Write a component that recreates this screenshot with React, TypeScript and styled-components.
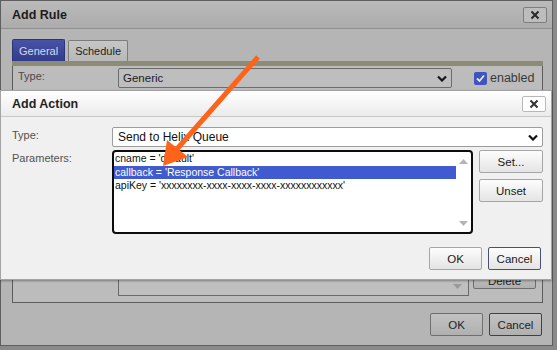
import * as React from "react";
import styled, { createGlobalStyle } from "styled-components";

const GlobalStyle = createGlobalStyle`
  html, body {
    margin: 0;
    padding: 0;
    background: #707070;
  }
  body {
    font-family: "Liberation Sans", Arial, sans-serif;
    font-size: 12px;
  }
`;

const Screen = styled.div`
  position: relative;
  width: 557px;
  height: 350px;
  overflow: hidden;
  background: #8a8a8a;
`;

/* ---------- outer (dimmed) dialog ---------- */

const OuterDialog = styled.div`
  box-sizing: border-box;
  width: 553px;
  height: 346px;
  border: 1px solid #5e5e5e;
  background: #b5b5b5;
  display: flex;
  flex-direction: column;
`;

const TitleBar = styled.div<{ $light?: boolean }>`
  box-sizing: border-box;
  height: ${(p) => (p.$light ? "26px" : "28px")};
  flex-shrink: 0;
  display: flex;
  align-items: center;
  justify-content: space-between;
  padding: 0 5px 0 11px;
  background: ${(p) =>
    p.$light
      ? "linear-gradient(#ffffff, #ebebeb)"
      : "linear-gradient(#bababa, #acacac)"};
  border-bottom: 1px solid ${(p) => (p.$light ? "#c8c8c8" : "#8e8e8e")};
`;

const Title = styled.span<{ $light?: boolean }>`
  font-weight: bold;
  font-size: 12.5px;
  color: ${(p) => (p.$light ? "#222" : "#1c1c1c")};
`;

const CloseButton = styled.div<{ $light?: boolean }>`
  box-sizing: border-box;
  width: 24px;
  height: 16px;
  border: 1px solid ${(p) => (p.$light ? "#b8b8b8" : "#7e7e7e")};
  border-radius: 2px;
  background: ${(p) => (p.$light ? "#ffffff" : "#bdbdbd")};
  display: flex;
  align-items: center;
  justify-content: center;
`;

const OuterBody = styled.div`
  flex: 1;
  display: flex;
  flex-direction: column;
  padding: 10px 9px 0 11px;
`;

const TabStrip = styled.div`
  display: flex;
  align-items: flex-end;
  gap: 3px;
  height: 22px;
`;

const Tab = styled.div<{ $active?: boolean }>`
  box-sizing: border-box;
  height: ${(p) => (p.$active ? "22px" : "21px")};
  padding: 0 6px;
  display: flex;
  align-items: center;
  font-size: 11px;
  border: 1px solid ${(p) => (p.$active ? "#2b3477" : "#7c7c7c")};
  border-bottom: none;
  border-radius: 2px 2px 0 0;
  color: ${(p) => (p.$active ? "#d6d8ea" : "#1e1e1e")};
  background: ${(p) =>
    p.$active
      ? "linear-gradient(#4853a8, #323c8c)"
      : "linear-gradient(#c6c6c6, #b8b8b8)"};
`;

const TabRule = styled.div`
  height: 5px;
  background: #8b8b77;
`;

const TabPanel = styled.div`
  box-sizing: border-box;
  height: 237px;
  border: 1px solid #5c5c5c;
  border-top: none;
  background: #bcbcbc;
  display: flex;
  flex-direction: column;
  justify-content: space-between;
  padding: 2px 6px 6px 5px;
`;

const PanelRow = styled.div`
  display: flex;
  align-items: center;
`;

const DimLabel = styled.span`
  width: 100px;
  align-self: flex-start;
  padding-top: 2px;
  font-size: 11px;
  color: #4a4a4a;
`;

const DimSelect = styled.div<{ $w: number }>`
  box-sizing: border-box;
  width: ${(p) => p.$w}px;
  height: 20px;
  border: 1px solid #6c6c6c;
  border-radius: 2px;
  background: #bebebe;
  display: flex;
  align-items: center;
  justify-content: space-between;
  padding: 0 4px 0 4px;
  font-size: 11.5px;
  color: #1c1c1c;
`;

const CheckGroup = styled.label`
  display: flex;
  align-items: center;
  gap: 3px;
  margin-left: 22px;
  font-size: 12.5px;
  color: #3a3a3a;
`;

const CheckBox = styled.span`
  width: 13px;
  height: 13px;
  border-radius: 2px;
  background: #4053bf;
  display: flex;
  align-items: center;
  justify-content: center;
`;

const DimList = styled.div`
  box-sizing: border-box;
  margin-left: 100px;
  width: 351px;
  height: 40px;
  border: 1px solid #6a6a6a;
  border-top: none;
  background: #bfbfbf;
  display: flex;
  justify-content: flex-end;
  align-items: flex-end;
  padding: 0 6px 6px 0;
`;

const ButtonRow = styled.div<{ $top: number }>`
  display: flex;
  justify-content: flex-end;
  gap: 6px;
  margin-top: ${(p) => p.$top}px;
  padding-right: 1px;
`;

const Button = styled.div<{ $w?: number; $dim?: boolean; $focus?: boolean; $h?: number }>`
  box-sizing: border-box;
  width: ${(p) => p.$w ?? 53}px;
  height: ${(p) => p.$h ?? 23}px;
  border: 1px solid
    ${(p) =>
      p.$focus ? (p.$dim ? "#3b3f5a" : "#4a5070") : p.$dim ? "#6f6f6f" : "#a6a6a6"};
  border-radius: 2px;
  background: ${(p) =>
    p.$dim
      ? "linear-gradient(#c2c2c2, #b0b0b0)"
      : "linear-gradient(#fdfdfd, #e4e4e4)"};
  display: flex;
  align-items: center;
  justify-content: center;
  font-size: 11.5px;
  color: ${(p) => (p.$dim ? "#1e1e1e" : "#1a1a1a")};
`;

const DeleteButton = styled(Button)`
  margin-left: 4px;
  align-self: flex-end;
  margin-bottom: 7px;
`;

/* ---------- inner (active) dialog ---------- */

const ActionDialog = styled.div`
  position: absolute;
  left: 0;
  top: 90px;
  box-sizing: border-box;
  width: 552px;
  height: 190px;
  border: 1px solid #a4a4a4;
  background: #f0f0f0;
  box-shadow: 0 1px 2px rgba(0, 0, 0, 0.35);
  display: flex;
  flex-direction: column;
`;

const FormGrid = styled.div`
  display: grid;
  grid-template-columns: 100px 1fr;
  row-gap: 3px;
  padding: 10px 9px 0 11px;
`;

const Label = styled.span`
  font-size: 11px;
  color: #505050;
  padding-top: 2px;
`;

const Select = styled.div`
  box-sizing: border-box;
  height: 20px;
  border: 1px solid #9c9c9c;
  border-radius: 2px;
  background: #fff;
  display: flex;
  align-items: center;
  justify-content: space-between;
  padding: 0 4px 0 5px;
  font-size: 12px;
  color: #111;
`;

const ParamRow = styled.div`
  display: flex;
  gap: 6px;
`;

const ListBox = styled.div`
  box-sizing: border-box;
  width: 361px;
  height: 84px;
  border: 2px solid #0c0c0c;
  border-radius: 4px;
  background: #fff;
  display: flex;
`;

const ListItems = styled.div`
  flex: 1;
  display: flex;
  flex-direction: column;
`;

const ListItem = styled.div<{ $selected?: boolean }>`
  height: 13.5px;
  line-height: 13px;
  padding-left: 1px;
  font-size: 10.5px;
  white-space: nowrap;
  color: ${(p) => (p.$selected ? "#fff" : "#111")};
  background: ${(p) => (p.$selected ? "#405bd0" : "transparent")};
`;

const ScrollTrack = styled.div`
  width: 15px;
  display: flex;
  flex-direction: column;
  justify-content: space-between;
  align-items: center;
  padding: 7px 0 6px;
`;

const SideButtons = styled.div`
  display: flex;
  flex-direction: column;
  gap: 6px;
`;

const FooterRow = styled(ButtonRow)`
  padding-right: 10px;
`;

const Arrow = styled.svg`
  position: absolute;
  left: 0;
  top: 0;
  pointer-events: none;
`;

const Chevron = ({ color = "#111" }: { color?: string }) => (
  <svg width="10" height="7" viewBox="0 0 10 7">
    <path d="M1 1.5 L5 5.5 L9 1.5" fill="none" stroke={color} strokeWidth="2.2" />
  </svg>
);

const Cross = ({ color }: { color: string }) => (
  <svg width="10" height="10" viewBox="0 0 10 10">
    <path d="M1.5 1.5 L8.5 8.5 M8.5 1.5 L1.5 8.5" stroke={color} strokeWidth="2" />
  </svg>
);

const Tri = ({ up, color }: { up?: boolean; color: string }) => (
  <svg width="9" height="5" viewBox="0 0 9 5">
    <path d={up ? "M0 5 L4.5 0 L9 5 Z" : "M0 0 L9 0 L4.5 5 Z"} fill={color} />
  </svg>
);

export default function App() {
  return (
    <Screen>
      <GlobalStyle />
      <OuterDialog>
        <TitleBar>
          <Title>Add Rule</Title>
          <CloseButton>
            <Cross color="#2a2a2a" />
          </CloseButton>
        </TitleBar>
        <OuterBody>
          <TabStrip>
            <Tab $active>General</Tab>
            <Tab>Schedule</Tab>
          </TabStrip>
          <TabRule />
          <TabPanel>
            <PanelRow>
              <DimLabel>Type:</DimLabel>
              <DimSelect $w={334}>
                <span>Generic</span>
                <Chevron color="#151515" />
              </DimSelect>
              <CheckGroup>
                <CheckBox>
                  <svg width="11" height="11" viewBox="0 0 11 11">
                    <path d="M2 5.5 L4.5 8 L9 2.5" fill="none" stroke="#e8e8f2" strokeWidth="1.8" />
                  </svg>
                </CheckBox>
                enabled
              </CheckGroup>
            </PanelRow>
            <PanelRow>
              <DimList>
                <Tri color="#9a9a9a" />
              </DimList>
              <DeleteButton $dim $w={63} $h={16}>
                Delete
              </DeleteButton>
            </PanelRow>
          </TabPanel>
          <ButtonRow $top={10}>
            <Button $dim>OK</Button>
            <Button $dim $focus>Cancel</Button>
          </ButtonRow>
        </OuterBody>
      </OuterDialog>

      <ActionDialog>
        <TitleBar $light>
          <Title $light>Add Action</Title>
          <CloseButton $light>
            <Cross color="#333" />
          </CloseButton>
        </TitleBar>
        <FormGrid>
          <Label>Type:</Label>
          <Select>
            <span>Send to Helix Queue</span>
            <Chevron />
          </Select>
          <Label>Parameters:</Label>
          <ParamRow>
            <ListBox>
              <ListItems>
                <ListItem>cname = 'default'</ListItem>
                <ListItem $selected>callback = 'Response Callback'</ListItem>
                <ListItem>apiKey = 'xxxxxxxx-xxxx-xxxx-xxxx-xxxxxxxxxxxx'</ListItem>
              </ListItems>
              <ScrollTrack>
                <Tri up color="#b4b4b4" />
                <Tri color="#b4b4b4" />
              </ScrollTrack>
            </ListBox>
            <SideButtons>
              <Button $w={64}>Set...</Button>
              <Button $w={64}>Unset</Button>
            </SideButtons>
          </ParamRow>
        </FormGrid>
        <FooterRow $top={13}>
          <Button>OK</Button>
          <Button $focus>Cancel</Button>
        </FooterRow>
      </ActionDialog>

      <Arrow width="557" height="350" viewBox="0 0 557 350">
        <line x1="258" y1="57" x2="177" y2="149" stroke="#fe6419" strokeWidth="5" />
        <polygon points="163,166 167,140 188,157" fill="#fe6419" />
      </Arrow>
    </Screen>
  );
}
